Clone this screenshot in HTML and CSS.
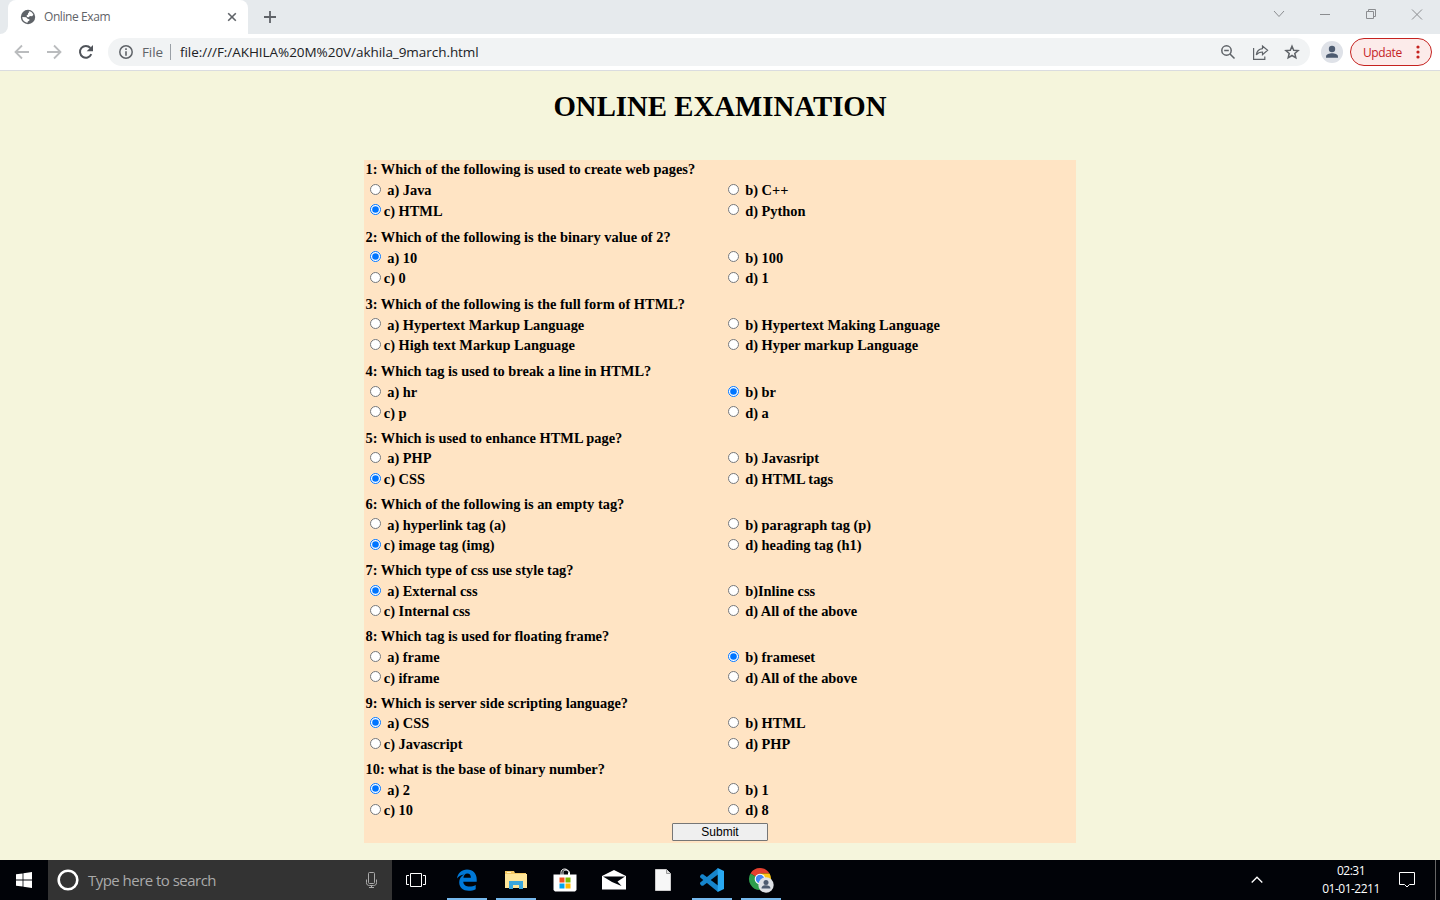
FILE: index.html
```html
<!DOCTYPE html>
<html lang="en">
<head>
<meta charset="utf-8">
<title>Online Exam</title>
<link rel="stylesheet" href="styles.css">
</head>
<body>
<header class="tabstrip">
  <div class="tab-edge"></div>
  <div class="tab">
    <svg class="globe" width="16" height="16" viewBox="0 0 16 16"><circle cx="8" cy="8" r="7.200" fill="#5f6368"/><path d="M8.800 2.300c2.100.2 3.900 1.600 4.600 3.500l-1.300 1.400-2.300-.2-.9 1.300-1.900-.3-.4-1.600 1.400-.9.100-1.400 1-.7zM2.300 8l3.900.3 1.700 1.700 1.500.2v1.400l-1.600.8-.3 1.300C4.600 13.400 2.300 11.100 2.300 8z" fill="#fff"/></svg>
    <span class="tab-title">Online Exam</span>
    <svg class="tab-close" width="10" height="10" viewBox="0 0 10 10"><path d="M1.200 1.200l7.600 7.600M8.800 1.200L1.200 8.800" stroke="#5f6368" stroke-width="1.600"/></svg>
  </div>
  <svg class="new-tab" width="12" height="12" viewBox="0 0 12 12"><path d="M6 0v12M0 6h12" stroke="#5f6368" stroke-width="1.8"/></svg>
  <svg class="window-controls" width="150" height="14" viewBox="0 0 150 14" fill="none" stroke="#8b8d90"><path d="M1 4l5 5.500L11 4M47 7.500h10M93.500 4.500h7v7h-7zM95.500 4.500v-2h7v7h-2M139 2.500l10 10M149 2.500l-10 10"/></svg>
</header>
<nav class="toolbar">
  <svg class="nav-icon" width="16" height="16" viewBox="0 0 16 16"><path d="M15 8H2M8 1.500L1.500 8 8 14.500" fill="none" stroke="#babcbe" stroke-width="1.8"/></svg>
  <svg class="nav-icon" width="16" height="16" viewBox="0 0 16 16"><path d="M1 8h13M8 1.500L14.500 8 8 14.500" fill="none" stroke="#babcbe" stroke-width="1.8"/></svg>
  <svg class="nav-icon" width="16" height="16" viewBox="0 0 16 16"><path d="M13.300 10.200A5.900 5.900 0 1 1 12.400 4" fill="none" stroke="#50545a" stroke-width="2"/><path d="M15 1v6.300H8.700z" fill="#50545a"/></svg>
  <div class="address">
    <svg width="14" height="14" viewBox="0 0 14 14"><circle cx="7" cy="7" r="6.200" fill="none" stroke="#5f6368" stroke-width="1.5"/><path d="M6.200 3.300h1.600v1.600H6.200zM6.200 6.200h1.600v4.500H6.200z" fill="#5f6368"/></svg>
    <span class="scheme">File</span>
    <span class="divider"></span>
    <span class="url">file:///F:/AKHILA%20M%20V/akhila_9march.html</span>
    <svg class="address-actions" width="80" height="16" viewBox="0 0 80 16" fill="none" stroke="#5f6368" stroke-width="1.5"><circle cx="6.500" cy="6.500" r="4.700"/><path d="M4.200 6.500h4.600M10 10l4.500 4.500"/><path d="M33.600 4v11.300h11.200v-2.800" stroke-width="1.200"/><path d="M42.500 4.600V2L47.600 6.300 42.500 10.600V8c-2.800 0-4.700.8-6.200 2.800.5-3.500 2.500-5.700 6.200-6.200z" stroke-width="1.200"/><path d="M72 2.200l1.700 4 4.400.4-3.300 2.900 1 4.300L72 11.500l-3.800 2.300 1-4.300-3.300-2.900 4.400-.4z"/></svg>
  </div>
  <svg class="avatar" width="22" height="22" viewBox="0 0 22 22"><circle cx="11" cy="11" r="11" fill="#dfe2e8"/><circle cx="11" cy="8" r="3.200" fill="#4d5b70"/><path d="M5 16.800v-1.300c0-2.200 3.500-3.300 6-3.300s6 1.100 6 3.300v1.300z" fill="#4d5b70"/></svg>
  <div class="update"><span>Update</span><svg width="4" height="14" viewBox="0 0 4 14" fill="#c5221f"><circle cx="2" cy="2" r="1.600"/><circle cx="2" cy="7" r="1.600"/><circle cx="2" cy="12" r="1.600"/></svg></div>
</nav>
<main class="page">
  <h1>ONLINE EXAMINATION</h1>
  <form class="exam">
    <fieldset class="q tall-tail raise-second"><p>1: Which of the following is used to create web pages?</p><label><input type="radio"><span>a) Java</span></label><label><input type="radio"><span>b) C++</span></label><label class="tight"><input type="radio" checked><span>c) HTML</span></label><label class="second"><input type="radio"><span>d) Python</span></label></fieldset>
    <fieldset class="q short-mid tall-tail raise-first"><p>2: Which of the following is the binary value of 2?</p><label class="first"><input type="radio" checked><span>a) 10</span></label><label class="first"><input type="radio"><span>b) 100</span></label><label class="tight"><input type="radio"><span>c) 0</span></label><label><input type="radio"><span>d) 1</span></label></fieldset>
    <fieldset class="q short-mid tall-tail raise-first"><p>3: Which of the following is the full form of HTML?</p><label class="first"><input type="radio"><span>a) Hypertext Markup Language</span></label><label class="first"><input type="radio"><span>b) Hypertext Making Language</span></label><label class="tight"><input type="radio"><span>c) High text Markup Language</span></label><label><input type="radio"><span>d) Hyper markup Language</span></label></fieldset>
    <fieldset class="q raise-second"><p>4: Which tag is used to break a line in HTML?</p><label><input type="radio"><span>a) hr</span></label><label><input type="radio" checked><span>b) br</span></label><label class="tight"><input type="radio"><span>c) p</span></label><label class="second"><input type="radio"><span>d) a</span></label></fieldset>
    <fieldset class="q short-lead"><p>5: Which is used to enhance HTML page?</p><label><input type="radio"><span>a) PHP</span></label><label><input type="radio"><span>b) Javasript</span></label><label class="tight"><input type="radio" checked><span>c) CSS</span></label><label><input type="radio"><span>d) HTML tags</span></label></fieldset>
    <fieldset class="q short-mid raise-first"><p>6: Which of the following is an empty tag?</p><label class="first"><input type="radio"><span>a) hyperlink tag (a)</span></label><label class="first"><input type="radio"><span>b) paragraph tag (p)</span></label><label class="tight"><input type="radio" checked><span>c) image tag (img)</span></label><label><input type="radio"><span>d) heading tag (h1)</span></label></fieldset>
    <fieldset class="q short-mid"><p>7: Which type of css use style tag?</p><label><input type="radio" checked><span>a) External css</span></label><label><input type="radio"><span>b)Inline css</span></label><label class="tight"><input type="radio"><span>c) Internal css</span></label><label><input type="radio"><span>d) All of the above</span></label></fieldset>
    <fieldset class="q raise-second"><p>8: Which tag is used for floating frame?</p><label><input type="radio"><span>a) frame</span></label><label><input type="radio" checked><span>b) frameset</span></label><label class="tight"><input type="radio"><span>c) iframe</span></label><label class="second"><input type="radio"><span>d) All of the above</span></label></fieldset>
    <fieldset class="q short-lead"><p>9: Which is server side scripting language?</p><label><input type="radio" checked><span>a) CSS</span></label><label><input type="radio"><span>b) HTML</span></label><label class="tight"><input type="radio"><span>c) Javascript</span></label><label><input type="radio"><span>d) PHP</span></label></fieldset>
    <fieldset class="q short-mid raise-first"><p>10: what is the base of binary number?</p><label class="first"><input type="radio" checked><span>a) 2</span></label><label class="first"><input type="radio"><span>b) 1</span></label><label class="tight"><input type="radio"><span>c) 10</span></label><label><input type="radio"><span>d) 8</span></label></fieldset>
    <button class="submit" type="button">Submit</button>
  </form>
</main>
<footer class="taskbar">
  <div class="start"><svg width="16" height="16" viewBox="0 0 16 16" fill="#fff"><path d="M0 2.300l6.600-.9v6.200H0zM7.400 1.300L16 0v7.600H7.400zM0 8.400h6.600v6.200L0 13.700zM7.400 8.400H16V16l-8.600-1.200z"/></svg></div>
  <div class="search">
    <svg width="22" height="22" viewBox="0 0 22 22"><circle cx="11" cy="11" r="9.300" fill="none" stroke="#fff" stroke-width="2.600"/></svg>
    <span>Type here to search</span>
    <svg class="mic" width="12" height="16" viewBox="0 0 12 16" fill="none" stroke="#aaa"><rect x="2.500" y=".5" width="6" height="11" rx="1"/><path d="M.5 7.500v3.200c0 2 1.200 2.800 3 2.800h4c1.800 0 3-.8 3-2.800V7.500M5.500 13.500v2M3 15.500h5"/></svg>
  </div>
  <div class="app task-view"><svg width="20" height="14" viewBox="0 0 20 14" fill="none" stroke="#fff"><path d="M4.500.5h11v13h-11zM3 2.500H.5v9H3M17 2.500h2.500v9H17"/></svg></div>
  <div class="app open"><svg width="22" height="22" viewBox="0 0 22 22"><path d="M1 9.500C1.800 4 5.700.5 11 .5c6 0 9.700 4.200 9.700 9.800v2.500H7.300c.2 3.400 3 4.800 6.200 4.800 2.200 0 4.300-.6 6.200-1.700v4.400c-2 1-4.400 1.500-7 1.500-5.700 0-9.500-3.200-9.500-8.500 0-3.400 1.700-6.300 4.800-7.900C5.200 5.600 2.700 7.100 1 9.500zm6.400-.8h7.500c0-2.500-1.300-4.100-3.600-4.100-2.200 0-3.600 1.800-3.900 4.100z" fill="#0078d7"/></svg></div>
  <div class="app open"><svg width="22" height="20" viewBox="0 0 22 20"><path d="M0 1h9l1 2h11v15H0z" fill="#f5c964"/><path d="M0 4h22v14H0z" fill="#ffe69a"/><path d="M2 2h4v1H2z" fill="#fff4c5"/><path d="M4 19v-8h14v8h-4v-4H8v4z" fill="#3ba7dd"/></svg></div>
  <div class="app"><svg width="24" height="24" viewBox="0 0 24 24"><path d="M8 7V4.500C8 2.500 9.500 1 11.700 1S15.500 2.500 15.500 4.500V7M10 7V4.500c0-2 1.200-2.500 3-2.500s3.500 1 3.500 3v2" fill="none" stroke="#fff"/><path d="M.5 6.500h23V22L22 23.500H2L.5 22z" fill="#fff"/><path d="M6.500 9.500h5v5h-5z" fill="#f25022"/><path d="M12.500 9.500h5v5h-5z" fill="#7fba00"/><path d="M6.500 15.500h5v5h-5z" fill="#00a4ef"/><path d="M12.500 15.500h5v5h-5z" fill="#ffb900"/></svg></div>
  <div class="app"><svg width="24" height="20" viewBox="0 0 24 20"><path d="M0 6L12 0l12 6v13.500H0z" fill="#fff"/><path d="M1 6.500h22l-7.500 5L19.500 16 10 12z" fill="#02050a"/></svg></div>
  <div class="app"><svg width="16" height="22" viewBox="0 0 16 22"><path d="M.5.500h11l4 4v17H.5z" fill="#f7f7f7" stroke="#ccc"/><path d="M11.500.500v4h4" fill="#ddd" stroke="#999"/></svg></div>
  <div class="app open"><svg width="24" height="24" viewBox="0 0 24 24"><path d="M0 8l1.600-1.800h1.500L18 17.500V24L.2 9.600z" fill="#1685cc"/><path d="M0 16l1.600 1.800h1.500L18 6.500V0L.2 14.400z" fill="#1685cc"/><path d="M17.700 0L24 3v18l-6.300 3z" fill="#29a9f2"/></svg></div>
  <div class="app open"><svg width="26" height="26" viewBox="0 0 26 26"><path d="M12 12L2.470 6.500A11 11 0 0 1 21.530 6.500H12z" fill="#e4402f"/><path d="M12 12V6.500h9.530A11 11 0 0 1 12 23z" fill="#fbc717"/><path d="M12 12v11A11 11 0 0 1 2.470 6.500z" fill="#2d9d4c"/><circle cx="12" cy="12" r="5.300" fill="#fff"/><circle cx="12" cy="12" r="4.200" fill="#4285f4"/><circle cx="18" cy="18" r="7.700" fill="#dee1e6"/><circle cx="18" cy="15.500" r="2.500" fill="#4d5b70"/><path d="M13.500 21.500c0-2.500 2-3.200 4.500-3.200s4.500.7 4.500 3.200z" fill="#4d5b70"/></svg></div>
  <div class="tray">
    <svg class="chevron" width="12" height="8" viewBox="0 0 12 8"><path d="M.7 6.500L6 1.200l5.300 5.300" fill="none" stroke="#fff" stroke-width="1.300"/></svg>
    <div class="clock"><span class="time">02:31</span><span class="date">01-01-2211</span></div>
    <svg class="note" width="16" height="16" viewBox="0 0 16 16"><path d="M.5.500h15v12h-5L8 15l-2.500-2.500h-5z" fill="none" stroke="#fff"/></svg>
    <span class="desktop-line"></span>
  </div>
</footer>
</body>
</html>
```
FILE: styles.css
```css
* { box-sizing: border-box; }
html, body { margin: 0; height: 100%; overflow: hidden; }
body { display: flex; flex-direction: column; width: 1440px; height: 900px; font-family: "Open Sans", "Noto Sans", sans-serif; }
svg { display: block; flex: none; }
span, p, h1 { white-space: nowrap; }

.tabstrip { display: flex; height: 34px; background: #e6eaed; flex: none; }
.tab-edge { width: 8px; background: #fff; }
.tab-edge::before { content: ""; display: block; height: 34px; background: #e6eaed; border-radius: 0 0 8px 0; }
.tab { display: flex; align-items: center; width: 240px; background: #fff; border-radius: 8px 8px 0 0; padding-left: 12px; }
.tab-title { margin: -1px 0 0 8px; font-size: 12px; letter-spacing: -.42px; color: #5f6368; width: 183px; }
.new-tab { margin: 11px 0 0 16px; }
.window-controls { margin: 7px 17px 0 auto; }

.toolbar { display: flex; align-items: center; height: 37px; flex: none; background: #fff; border-bottom: 1px solid #dadce0; padding: 0 8px 0 14px; }
.nav-icon { margin-right: 16px; }
.address { display: flex; align-items: center; width: 1202px; height: 28px; margin-left: -2px; padding: 0 10px 0 11px; border-radius: 14px; background: #f1f3f4; font-size: 14px; }
.scheme { width: 28px; margin-left: 9px; color: #5f6368; font-size: 13.500px; letter-spacing: -.1px; }
.divider { width: 1px; height: 16px; background: #9aa0a6; }
.url { margin-left: 9px; color: #202124; font-size: 13.500px; letter-spacing: -.05px; }
.address-actions { margin-left: auto; }
.avatar { margin-left: 11px; }
.update { display: flex; align-items: center; justify-content: space-between; width: 82px; height: 28px; margin-left: 7px; padding: 0 11px 0 12px; border: 1px solid #c5221f; border-radius: 14px; background: #fcebea; color: #c5221f; font-size: 12px; letter-spacing: -.4px; }

.page { flex: 1; background: #f5f5dc; font-family: "Liberation Serif", serif; font-weight: bold; color: #000; }
h1 { margin: 19px 0 37px; text-align: center; font-size: 28.8px; line-height: 33px; }
.exam { display: flex; flex-direction: column; width: 712px; height: 683px; margin: 0 auto; background: #ffe4c4; font-size: 14.4px; }
.q { --lead: 21px; --mid: 21px; --tail: 25px; --first: 3px; --second: 3px; display: grid; grid-template-columns: 358px 1fr; grid-template-rows: var(--lead) var(--mid) var(--tail); margin: 0; padding: 0 0 0 1.500px; border: 0; min-width: 0; line-height: 18px; }
.short-lead { --lead: 20px; }
.short-mid { --mid: 20px; }
.tall-tail { --tail: 26px; }
.raise-first { --first: 2px; }
.raise-second { --second: 2px; }
.q p { grid-column: 1 / -1; margin: 0; }
.q label { display: flex; align-items: flex-start; padding-left: 4.500px; }
.q input { width: 11px; height: 11px; margin: 3px 6.200px 0 0; }
.q .first input { margin-top: var(--first); }
.q .second input { margin-top: var(--second); }
.q .tight input { margin: var(--second) 2.800px 0 0; }
.submit { width: 96px; height: 18px; margin: -3px auto 0; padding: 0; border: 1px solid #767676; border-radius: 1px; background: #efefef; font: 12px "Liberation Sans", Arial, sans-serif; color: #000; flex: none; }

.taskbar { display: flex; height: 40px; background: #010308; flex: none; color: #fff; }
.start { display: grid; place-items: center; width: 48px; }
.search { display: flex; align-items: center; width: 344px; padding: 0 14px 0 9px; background: #333; color: #aaa; font-size: 15px; }
.search span { margin-left: 9px; letter-spacing: -.53px; }
.mic { margin-left: auto; }
.app { display: grid; place-items: center; width: 49px; }
.task-view { width: 48px; margin-right: 2px; }
.open { background: linear-gradient(#76b9ed, #76b9ed) center bottom / 40px 2px no-repeat; }
.tray { display: flex; flex: 1; align-items: center; }
.chevron { margin-left: 466px; }
.clock { display: flex; flex-direction: column; align-items: center; width: 60px; margin-left: 58px; font-size: 12px; line-height: 18px; letter-spacing: -.5px; }
.note { margin-left: 18px; }
.desktop-line { width: 1px; height: 40px; margin: 0 4px 0 auto; background: #666; }
```
